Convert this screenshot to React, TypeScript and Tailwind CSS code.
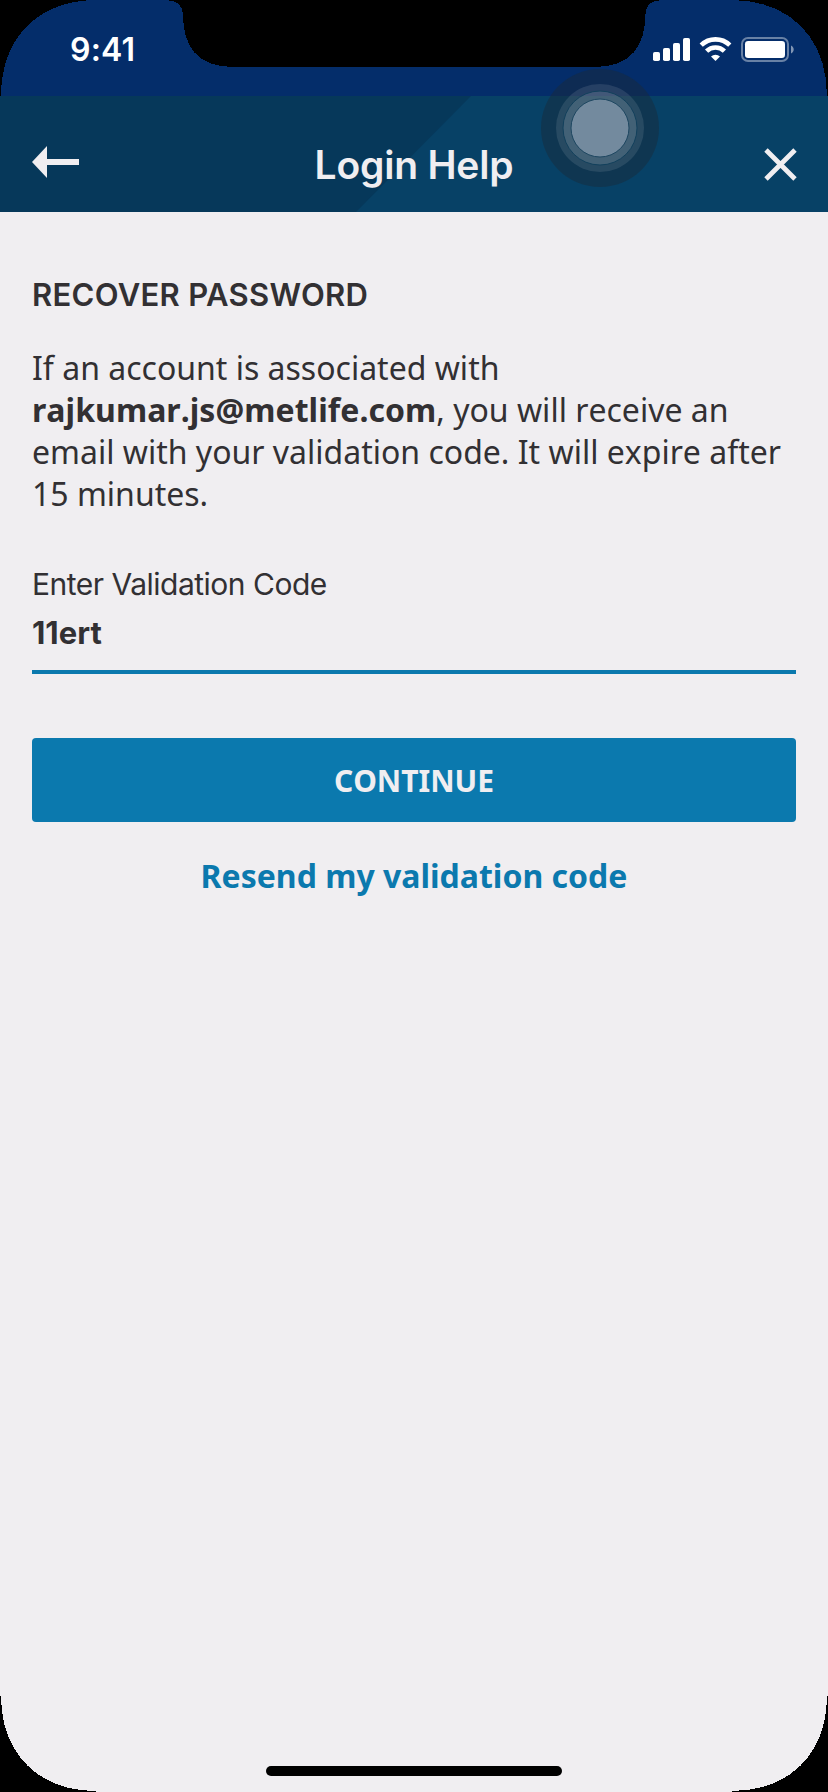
function StatusIcons() {
  return (
    <svg className="block h-[27px] w-[144px]" viewBox="652 36 144 27" fill="#fff">
      <rect x="653" y="52" width="7" height="9" rx="1.8" />
      <rect x="663" y="48" width="7" height="13" rx="1.8" />
      <rect x="673" y="43" width="7" height="18" rx="1.8" />
      <rect x="683" y="38" width="7" height="23" rx="1.8" />
      <g fill="none" stroke="#fff" strokeWidth="4.6">
        <path d="M701.2 45.2 A20.5 20.5 0 0 1 729.8 45.2" />
        <path d="M706.6 51.2 A12.7 12.7 0 0 1 724.4 51.2" />
      </g>
      <path d="M715.5 61 L711 56.6 A6.6 6.6 0 0 1 720 56.6 Z" />
      <rect x="742" y="38" width="46" height="23" rx="6" fill="none" stroke="#fff" strokeOpacity=".4" strokeWidth="2" />
      <rect x="745" y="41" width="40" height="17" rx="3.2" />
      <path d="M791 45.5 C794.6 47 794.6 52 791 53.5 Z" fillOpacity=".5" />
    </svg>
  );
}

function StatusBar() {
  return (
    <div className="flex h-24 items-start justify-between bg-[#042d6a] pl-[70px] pr-8 pt-9">
      <span className="font-['Inter',sans-serif] text-[32px] font-semibold leading-[28px] tracking-[0.2px] text-white">
        9:41
      </span>
      <StatusIcons />
    </div>
  );
}

function NavBar() {
  return (
    <header className="relative flex h-[116px] items-center justify-between bg-[#06385a] pl-8 pr-[31px]">
      <div className="absolute inset-0 bg-[#074166] [clip-path:polygon(471px_0,100%_0,100%_100%,356px_100%)]" />
      <button className="relative mt-[16px]" aria-label="Back">
        <svg className="block h-8 w-[47px]" viewBox="0 0 47 32" fill="#f0eef1">
          <path d="M0 16 L15 0 V13 H47 V19 H15 V32 Z" />
        </svg>
      </button>
      <h1 className="absolute inset-x-0 top-[45px] text-center font-['Inter',sans-serif] text-[39px] font-semibold leading-[48px] tracking-[-0.2px] text-[#f0eef1]">
        Login Help
      </h1>
      <button className="relative mt-[20px]" aria-label="Close">
        <svg className="block h-[33px] w-[33px]" viewBox="0 0 33 33" fill="none" stroke="#f0eef1" strokeWidth="4.8">
          <path d="M2 2 L31 31 M31 2 L2 31" />
        </svg>
      </button>
    </header>
  );
}

function AssistiveTouch() {
  return (
    <svg className="absolute left-[540px] top-[68px] h-[120px] w-[120px]" viewBox="-60 -60 120 120">
      <circle r="59" fill="#1a2a38" fillOpacity=".45" />
      <circle r="44" fill="#fff" fillOpacity=".1" />
      <circle r="37" fill="#fff" fillOpacity=".13" stroke="#12405c" strokeWidth="1" />
      <circle r="29" fill="#738a9e" stroke="#1d4660" strokeWidth="1" />
    </svg>
  );
}

function DeviceFrame() {
  return (
    <svg className="pointer-events-none absolute inset-0 h-full w-full" viewBox="0 0 828 1792" shapeRendering="crispEdges">
      <path d="M0 0 H97 C38 0 1 38 1 96 H0 Z" />
      <path d="M828 0 H731 C790 0 827 38 827 96 H828 Z" />
      <path d="M166 0 C178 1 182 5 183 14 C183 46 197 67 233 67 H595 C631 67 645 46 645.500 14 C646 5 650 1 662 0 Z" />
      <path d="M0 1792 V1696 H1 C1 1753 38 1791 96 1791 V1792 Z" />
      <path d="M828 1792 V1696 H827 C827 1753 790 1791 732 1791 V1792 Z" />
    </svg>
  );
}

export default function App() {
  return (
    <div className="relative flex h-[1792px] w-[828px] flex-col overflow-hidden bg-[#f0eef1] font-['Noto_Sans',sans-serif] text-[#323033]">
      <StatusBar />
      <NavBar />
      <main className="flex flex-1 flex-col px-8 pt-[62px]">
        <h2 className="whitespace-nowrap font-['Inter',sans-serif] text-[31px] font-semibold leading-[42px] tracking-[0.3px]">
          RECOVER PASSWORD
        </h2>
        <p className="mt-[31px] whitespace-nowrap text-[32px] leading-[42px] [font-kerning:none]">
          If an account is associated with
          <br />
          <strong className="font-bold tracking-[0.05px]">rajkumar.js@metlife.com</strong>, you will receive an
          <br />
          email with your validation code. It will expire after
          <br />
          15 minutes.
        </p>
        <label className="mt-[48px] font-['Inter',sans-serif] leading-[42px]">
          <span className="block text-[30px] tracking-[-0.5px]">Enter Validation Code</span>
          <span className="mt-[7px] box-content block h-[58px] border-b-4 border-[#0b79ae] text-[31px] font-bold leading-[42px]">
            11ert
          </span>
        </label>
        <button className="mt-16 h-[84px] rounded-[4px] bg-[#0b79ae] text-[30px] font-bold leading-[86px] text-[#f0eef1] [font-kerning:none]">
          CONTINUE
        </button>
        <a className="mt-8 text-center text-[32px] font-bold leading-[44px] text-[#0b79ae] [font-kerning:none]">
          Resend my validation code
        </a>
      </main>
      <div className="mb-4 h-[10px] w-[296px] self-center rounded-full bg-black" />
      <AssistiveTouch />
      <DeviceFrame />
    </div>
  );
}
